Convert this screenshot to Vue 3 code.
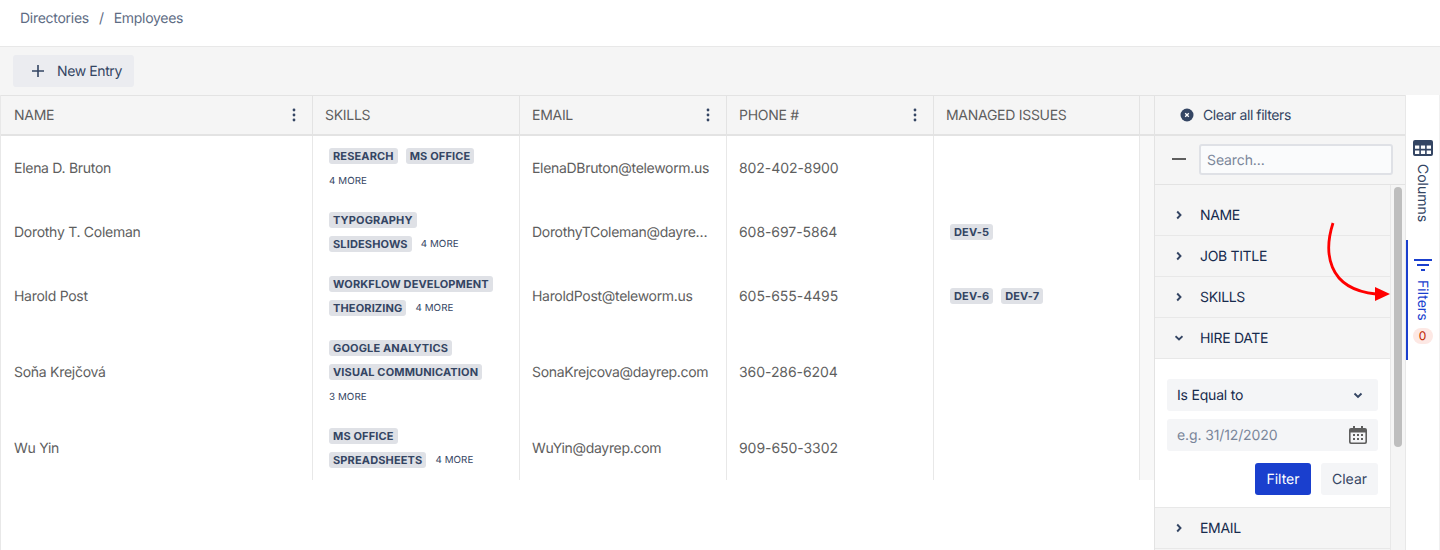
<script setup>
const columns = [
  { title: 'NAME', key: 'name', menu: true, cls: 'c-name' },
  { title: 'SKILLS', key: 'skills', menu: false, cls: 'c-skills' },
  { title: 'EMAIL', key: 'email', menu: true, cls: 'c-email' },
  { title: 'PHONE #', key: 'phone', menu: true, cls: 'c-phone' },
  { title: 'MANAGED ISSUES', key: 'issues', menu: false, cls: 'c-issues' }
]
const rows = [
  { name: 'Elena D. Bruton', lines: [{ tags: ['RESEARCH', 'MS OFFICE'] }, { tags: [], more: '4 MORE' }], email: 'ElenaDBruton@teleworm.us', phone: '802-402-8900', issues: [], tall: false },
  { name: 'Dorothy T. Coleman', lines: [{ tags: ['TYPOGRAPHY'] }, { tags: ['SLIDESHOWS'], more: '4 MORE' }], email: 'DorothyTColeman@dayre…', phone: '608-697-5864', issues: ['DEV-5'], tall: false },
  { name: 'Harold Post', lines: [{ tags: ['WORKFLOW DEVELOPMENT'] }, { tags: ['THEORIZING'], more: '4 MORE' }], email: 'HaroldPost@teleworm.us', phone: '605-655-4495', issues: ['DEV-6', 'DEV-7'], tall: false },
  { name: 'Soňa Krejčová', lines: [{ tags: ['GOOGLE ANALYTICS'] }, { tags: ['VISUAL COMMUNICATION'] }, { tags: [], more: '3 MORE' }], email: 'SonaKrejcova@dayrep.com', phone: '360-286-6204', issues: [], tall: true },
  { name: 'Wu Yin', lines: [{ tags: ['MS OFFICE'] }, { tags: ['SPREADSHEETS'], more: '4 MORE' }], email: 'WuYin@dayrep.com', phone: '909-650-3302', issues: [], tall: false }
]
</script>

<template>
  <div class="page">
    <nav class="crumbs">
      <span>Directories</span><span class="sep">/</span><span>Employees</span>
    </nav>

    <div class="toolbar">
      <button class="new-btn">
        <svg width="14" height="14" viewBox="0 0 14 14"><path d="M7 1v12M1 7h12" stroke="#344563" stroke-width="1.6" fill="none"/></svg>
        <span>New Entry</span>
      </button>
    </div>

    <div class="body">
      <div class="grid">
        <div class="head">
          <div v-for="c in columns" :key="c.key" class="hcell" :class="c.cls">
            <span>{{ c.title }}</span>
            <svg v-if="c.menu" class="dots" width="4" height="14" viewBox="0 0 4 14"><circle cx="2" cy="2" r="1.4"/><circle cx="2" cy="7" r="1.4"/><circle cx="2" cy="12" r="1.4"/></svg>
          </div>
          <div class="hfill"></div>
        </div>
        <div class="rows">
          <div v-for="r in rows" :key="r.name" class="row" :class="{ tall: r.tall }">
            <div class="cell c-name">{{ r.name }}</div>
            <div class="cell c-skills">
              <div class="stack">
                <div v-for="(l, i) in r.lines" :key="i" class="line">
                  <span v-for="t in l.tags" :key="t" class="tag">{{ t }}</span>
                  <span v-if="l.more" class="more">{{ l.more }}</span>
                </div>
              </div>
            </div>
            <div class="cell c-email">{{ r.email }}</div>
            <div class="cell c-phone">{{ r.phone }}</div>
            <div class="cell c-issues">
              <div class="line"><span v-for="t in r.issues" :key="t" class="tag">{{ t }}</span></div>
            </div>
            <div class="fill"></div>
          </div>
        </div>
      </div>

      <aside class="panel">
        <div class="clear-all">
          <svg width="14" height="14" viewBox="0 0 14 14"><circle cx="7" cy="7" r="6.5" fill="#344563"/><path d="M5.200 5.200l3.600 3.600M8.800 5.200l-3.600 3.600" stroke="#fff" stroke-width="1.300"/></svg>
          <span>Clear all filters</span>
        </div>
        <div class="search-row">
          <span class="minus"></span>
          <div class="search">Search...</div>
        </div>
        <div class="list-wrap">
          <div class="list">
            <div class="item"><svg class="chev" width="8" height="10" viewBox="0 0 8 10"><path d="M2.200 1.500L5.500 5 2.200 8.500" /></svg><span>NAME</span></div>
            <div class="item"><svg class="chev" width="8" height="10" viewBox="0 0 8 10"><path d="M2.200 1.500L5.500 5 2.200 8.500" /></svg><span>JOB TITLE</span></div>
            <div class="item"><svg class="chev" width="8" height="10" viewBox="0 0 8 10"><path d="M2.200 1.500L5.500 5 2.200 8.500" /></svg><span>SKILLS</span></div>
            <div class="item"><svg class="chev" width="8" height="10" viewBox="0 0 8 10"><path d="M.5 3.200L4 6.500l3.500-3.300" /></svg><span>HIRE DATE</span></div>
            <div class="form">
              <div class="field select">
                <span>Is Equal to</span>
                <svg class="chev" width="10" height="7" viewBox="0 0 10 7"><path d="M1.500 1.500L5 5l3.500-3.500" /></svg>
              </div>
              <div class="field date">
                <span>e.g. 31/12/2020</span>
                <svg width="18" height="18" viewBox="0 0 18 18"><path fill="#5e5e5e" fill-rule="evenodd" d="M4 0h2v2h6V0h2v2h2a2 2 0 0 1 2 2v12a2 2 0 0 1-2 2H2a2 2 0 0 1-2-2V4a2 2 0 0 1 2-2h2zM1.600 6.500V15.500a.9.9 0 0 0 .9.9h13a.9.9 0 0 0 .9-.9V6.500z"/><path fill="#5e5e5e" d="M4 8h2v2H4zM8 8h2v2H8zM12 8h2v2h-2zM4 12h2v2H4zM8 12h2v2H8zM12 12h2v2h-2z"/></svg>
              </div>
              <div class="actions">
                <button class="btn primary">Filter</button>
                <button class="btn plain">Clear</button>
              </div>
            </div>
            <div class="item"><svg class="chev" width="8" height="10" viewBox="0 0 8 10"><path d="M2.200 1.500L5.500 5 2.200 8.500" /></svg><span>EMAIL</span></div>
          </div>
          <div class="track"><div class="thumb"></div></div>
        </div>
      </aside>

      <div class="side">
        <div class="tab columns-tab">
          <svg width="20" height="16" viewBox="0 0 20 16"><path fill="#344563" fill-rule="evenodd" d="M2 0h16a2 2 0 0 1 2 2v12a2 2 0 0 1-2 2H2a2 2 0 0 1-2-2V2a2 2 0 0 1 2-2zM2 5.500V8.800h4.300V5.500zM7.900 5.500V8.800h4.200V5.500zM13.700 5.500V8.800H18V5.500zM2 10.400V14h4.300v-3.600zM7.900 10.400V14h4.200v-3.600zM13.700 10.400V14H18v-3.600z"/></svg>
          <span class="vtext">Columns</span>
        </div>
        <div class="tab filters-tab">
          <svg width="18" height="14" viewBox="0 0 18 14"><path fill="#1a3fce" d="M0 1h18v2H0zM3 6h12v2H3zM7 11h4v2H7z"/></svg>
          <span class="vtext">Filters</span>
          <span class="badge">0</span>
        </div>
      </div>

      <svg class="annot" width="80" height="90" viewBox="0 0 80 90">
        <path d="M13 2C4 30 6 68 56 73" fill="none" stroke="#ff0000" stroke-width="2.800"/>
        <path d="M55 66l15 7-15 7z" fill="#ff0000"/>
      </svg>
    </div>
  </div>
</template>

<style>
html, body { margin: 0; background: #fff; }
</style>

<style scoped>
.page {
  width: 1440px;
  height: 550px;
  overflow: hidden;
  font-family: Inter, "Liberation Sans", sans-serif;
  font-size: 14px;
  color: #5e5e5e;
  background: #fff;
  text-rendering: geometricPrecision;
  letter-spacing: -0.28px;
}
.crumbs {
  height: 46px;
  box-sizing: border-box;
  padding: 10px 20px 0;
  line-height: 17px;
  font-size: 14px;
  color: #5e6c84;
  display: flex;
}
.sep { margin: 0 10px; }
.toolbar {
  height: 49px;
  box-sizing: border-box;
  padding: 8px 13px;
  background: #f5f5f5;
  border-top: 1px solid #e8e8e8;
}
.new-btn {
  width: 121px;
  height: 32px;
  border: 0;
  border-radius: 3px;
  background: #ebecf0;
  color: #344563;
  font: 14px Inter, "Liberation Sans", sans-serif;
  letter-spacing: -0.4px;
  text-rendering: geometricPrecision;
  display: flex;
  align-items: center;
  padding: 0 0 0 18px;
  gap: 12px;
}
.body {
  position: relative;
  display: flex;
  height: 455px;
}
.grid {
  width: 1154px;
  border-left: 1px solid #e8e8e8;
  box-sizing: border-box;
  flex: none;
  display: flex;
  flex-direction: column;
}
.head {
  display: flex;
  height: 41px;
  box-sizing: border-box;
  background: #f5f5f5;
  border-top: 1px solid #e3e3e3;
  border-bottom: 2px solid #e3e3e3;
}
.hcell {
  box-sizing: border-box;
  display: flex;
  align-items: center;
  justify-content: space-between;
  padding: 0 16px 0 13px;
  border-right: 1px solid #e3e3e3;
  line-height: 17px;
}
.hcell.c-skills, .hcell.c-email, .hcell.c-phone, .hcell.c-issues { padding-left: 12px; }
.dots { fill: #344563; }
.hfill { flex: 1; }
.c-name { width: 312px; flex: none; }
.c-skills, .c-email, .c-phone { width: 207px; flex: none; }
.c-issues { width: 206px; flex: none; }
.row {
  display: flex;
  height: 64px;
}
.row.tall { height: 88px; }
.cell {
  box-sizing: border-box;
  display: flex;
  align-items: center;
  padding: 0 13px;
  border-right: 1px solid #e8e8e8;
  white-space: nowrap;
  overflow: hidden;
}
.cell.c-skills { padding: 0 0 0 16px; }
.cell.c-email { padding-left: 12px; letter-spacing: -0.31px; }
.cell.c-phone { padding-left: 12px; letter-spacing: -0.06px; }
.cell.c-issues { padding: 0 0 0 16px; }
.fill {
  flex: 1;
  background: #f8f8f8;
}
.rows { position: relative; }
.stack {
  display: flex;
  flex-direction: column;
  gap: 8px;
}
.line {
  display: flex;
  align-items: center;
  gap: 8px;
  height: 16px;
}
.tag {
  height: 16px;
  line-height: 16px;
  padding: 0 4px;
  border-radius: 3px;
  background: #dfe1e6;
  color: #344563;
  font-size: 11px;
  font-weight: 700;
  letter-spacing: 0.14px;
  white-space: nowrap;
}
.more {
  font-size: 9.75px;
  letter-spacing: 0.1px;
  color: #344563;
  margin-left: 1px;
  padding-top: 1px;
}
.line > .more:first-child { margin-left: 0; padding-top: 2px; }
.panel {
  width: 251px;
  flex: none;
  box-sizing: border-box;
  background: #f5f5f5;
  border-left: 1px solid #e3e3e3;
  display: flex;
  flex-direction: column;
  color: #172b4d;
}
.clear-all {
  height: 41px;
  flex: none;
  box-sizing: border-box;
  border-top: 1px solid #e3e3e3;
  border-bottom: 2px solid #e3e3e3;
  display: flex;
  align-items: center;
  gap: 9px;
  padding-left: 25px;
  color: #344563;
  letter-spacing: -0.42px;
}
.search-row {
  height: 49px;
  flex: none;
  box-sizing: border-box;
  border-bottom: 1px solid #e3e3e3;
  display: flex;
  align-items: center;
  padding: 0 12px 2px 17px;
}
.minus {
  width: 14px;
  height: 2px;
  background: #5e5e5e;
  margin-right: 13px;
}
.search {
  width: 194px;
  height: 31px;
  box-sizing: border-box;
  border: 2px solid #dfe1e6;
  border-radius: 3px;
  background: #fafbfc;
  color: #7a869a;
  padding-left: 6px;
  line-height: 29px;
  letter-spacing: -0.1px;
}
.list-wrap {
  flex: 1;
  display: flex;
  min-height: 0;
}
.list {
  width: 236px;
  flex: none;
  box-sizing: border-box;
  border-right: 1px solid #e8e8e8;
}
.item {
  height: 41px;
  box-sizing: border-box;
  border-bottom: 1px solid #e8e8e8;
  display: flex;
  align-items: center;
  padding-left: 20px;
  gap: 17px;
  letter-spacing: -0.33px;
}
.item:first-child { height: 51px; padding-top: 10px; }
.chev path {
  fill: none;
  stroke: #344563;
  stroke-width: 1.9;
}
.form {
  height: 149px;
  box-sizing: border-box;
  background: #fff;
  border-bottom: 1px solid #e8e8e8;
  padding: 20px 12px 0;
  display: flex;
  flex-direction: column;
  gap: 8px;
}
.field {
  height: 32px;
  flex: none;
  border-radius: 3px;
  background: #f4f5f7;
  display: flex;
  align-items: center;
  justify-content: space-between;
  padding: 0 10px;
}
.select { padding-right: 15px; color: #172b4d; letter-spacing: -0.2px; }
.date { color: #7a869a; padding-right: 11px; letter-spacing: -0.12px; }
.actions {
  display: flex;
  justify-content: flex-end;
  gap: 10px;
  margin-top: 4px;
}
.btn {
  height: 32px;
  border: 0;
  border-radius: 3px;
  font: 14px Inter, "Liberation Sans", sans-serif;
  text-rendering: geometricPrecision;
  padding: 0;
}
.primary { width: 56px; background: #1a3fce; color: #fff; }
.plain { width: 57px; background: #f4f5f7; color: #344563; }
.track {
  flex: 1;
  padding: 2px 3px 0 3px;
}
.thumb {
  width: 8px;
  height: 260px;
  border-radius: 4px;
  background: #bebebe;
}
.side {
  flex: 1;
  border-left: 1px solid #e8e8e8;
  border-right: 1px solid #f0f0f0;
  background: #fff;
  position: relative;
  display: flex;
  flex-direction: column;
  align-items: center;
  font-size: 14px;
  letter-spacing: 0;
}
.tab {
  box-sizing: border-box;
  display: flex;
  flex-direction: column;
  align-items: center;
  align-self: stretch;
}
.columns-tab {
  height: 145px;
  padding-top: 45px;
  color: #344563;
  gap: 8px;
}
.filters-tab {
  height: 120px;
  border-left: 2px solid #1a3fce;
  padding-top: 18px;
  color: #1a3fce;
  padding-right: 2px;
}
.vtext {
  writing-mode: vertical-rl;
  line-height: 18px;
  margin-right: 2px;
}
.filters-tab .vtext { margin-top: 8px; }
.badge {
  margin-top: 7px;
  width: 20px;
  height: 16px;
  border-radius: 8px;
  background: #fde8e4;
  color: #bf2600;
  font-size: 12px;
  line-height: 16px;
  text-align: center;
}
.annot {
  position: absolute;
  left: 1320px;
  top: 126px;
}
</style>
